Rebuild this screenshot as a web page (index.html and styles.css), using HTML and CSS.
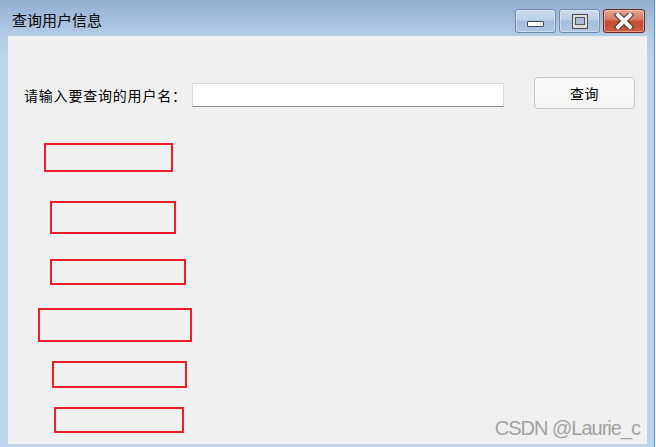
FILE: index.html
```html
<!DOCTYPE html>
<html lang="zh-CN">
<head>
    <meta charset="UTF-8">
    <title>查询用户信息</title>
    <link rel="stylesheet" href="styles.css">
</head>
<body>
    <div class="window">
        <div class="title-bar">
            <span class="title">查询用户信息</span>
            <div class="controls">
                <div class="ctl ctl-min"><span class="min-bar"></span></div>
                <div class="ctl ctl-max"><span class="max-box"><span class="max-inner"></span></span></div>
                <div class="ctl ctl-close">
                    <svg width="20" height="16" viewBox="0 0 20 16">
                        <path d="M4 2 L16 14 M16 2 L4 14" stroke="#3a2a2a" stroke-width="6" stroke-linecap="square"/>
                        <path d="M4 2 L16 14 M16 2 L4 14" stroke="#ffffff" stroke-width="4" stroke-linecap="square"/>
                    </svg>
                </div>
            </div>
        </div>

        <div class="client">
            <div class="search-row">
                <label class="search-label" for="username">请输入要查询的用户名：</label>
                <input type="text" id="username" class="search-input">
                <button class="search-btn">查询</button>
            </div>

            <div class="marks">
                <div class="mark mark-1"></div>
                <div class="mark mark-2"></div>
                <div class="mark mark-3"></div>
                <div class="mark mark-4"></div>
                <div class="mark mark-5"></div>
                <div class="mark mark-6"></div>
            </div>

            <div class="watermark">CSDN @Laurie_c</div>
        </div>
    </div>
</body>
</html>
```

FILE: styles.css
```css
*{
    margin: 0;
    padding: 0;
    box-sizing: border-box;
}

body{
    width: 656px;
    height: 447px;
    overflow: hidden;
    background-color: #ffffff;
    font-family: "Noto Sans CJK SC", sans-serif;
}

.window{
    width: 655px;
    height: 447px;
    display: flex;
    flex-direction: column;
    background: linear-gradient(to bottom, #93afd0 0px, #b4cce7 36px, #bcd5ed 60px, #bcd5ed 100%);
    border-right: 1px solid #4a9ad2;
    padding: 0 7px 3px 8px;
}

.title-bar{
    height: 36px;
    display: flex;
    justify-content: space-between;
    align-items: flex-start;
}

.title{
    margin-top: 10px;
    margin-left: 4px;
    font-size: 15px;
    line-height: 20px;
    color: #000000;
}

.controls{
    display: flex;
    gap: 3px;
    margin-top: 9px;
    margin-right: 2px;
}

.ctl{
    height: 24px;
    border-radius: 3px;
    display: flex;
    justify-content: center;
    align-items: center;
}

.ctl-min,
.ctl-max{
    width: 41px;
    border: 1px solid #7189aa;
    background: linear-gradient(to bottom, #cbdcef 0%, #bcd0e8 45%, #a4bedc 50%, #aec6e2 100%);
    box-shadow: inset 0 0 0 1px rgba(255, 255, 255, 0.4);
}

.ctl-close{
    width: 42px;
    border: 1px solid #6e2a1f;
    background: linear-gradient(to bottom, #e4a592 0%, #d67a62 45%, #c24a30 50%, #cc5a3e 100%);
    box-shadow: inset 0 0 0 1px rgba(255, 220, 200, 0.5);
}

.min-bar{
    width: 17px;
    height: 6px;
    margin-top: 6px;
    background-color: #ffffff;
    border: 1px solid #3b4a5c;
    border-radius: 1px;
}

.max-box{
    width: 16px;
    height: 15px;
    border: 1px solid #4a4a4a;
    background-color: #dcdcdc;
    display: flex;
    justify-content: center;
    align-items: center;
}

.max-inner{
    width: 10px;
    height: 8px;
    border: 1px solid #4c5a6a;
    background-color: #a9bfd8;
}

.client{
    position: relative;
    flex: 1;
    background-color: #f0f0f0;
    padding: 41px 0 0 0;
}

.search-row{
    display: flex;
    align-items: flex-start;
}

.search-label{
    margin-top: 6px;
    margin-left: 16px;
    width: 168px;
    font-size: 14px;
    letter-spacing: 0.8px;
    line-height: 24px;
    white-space: nowrap;
    color: #000000;
}

.search-input{
    margin-top: 6px;
    width: 312px;
    height: 24px;
    border: 1px solid #d9d9d9;
    border-bottom: 1px solid #8c8c8c;
    background-color: #ffffff;
    outline: none;
}

.search-btn{
    margin-left: 30px;
    width: 101px;
    height: 32px;
    border: 1px solid #c4c4c4;
    border-radius: 4px;
    background: linear-gradient(to bottom, #fbfbfb, #f4f4f4);
    font-family: "Noto Sans CJK SC", sans-serif;
    font-size: 14px;
    letter-spacing: 0.4px;
    color: #000000;
}

.marks{
    display: flex;
    flex-direction: column;
    align-items: flex-start;
    padding-top: 34px;
}

.mark{
    border: 2px solid #ee1c25;
}

.mark-1{
    margin-left: 36px;
    width: 129px;
    height: 29px;
}

.mark-2{
    margin-top: 29px;
    margin-left: 42px;
    width: 126px;
    height: 33px;
}

.mark-3{
    margin-top: 25px;
    margin-left: 42px;
    width: 136px;
    height: 26px;
}

.mark-4{
    margin-top: 23px;
    margin-left: 30px;
    width: 154px;
    height: 34px;
}

.mark-5{
    margin-top: 19px;
    margin-left: 44px;
    width: 135px;
    height: 27px;
}

.mark-6{
    margin-top: 19px;
    margin-left: 46px;
    width: 130px;
    height: 26px;
}

.watermark{
    position: absolute;
    right: 7px;
    bottom: 5px;
    font-family: "Liberation Sans", Arial, sans-serif;
    font-size: 20px;
    letter-spacing: -1px;
    line-height: 22px;
    color: #a2a2a2;
}
```
